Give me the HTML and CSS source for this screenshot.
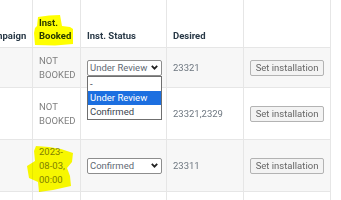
FILE: index.html
```html
<!DOCTYPE html>
<html lang="en">
<head>
    <meta charset="UTF-8">
    <meta name="viewport" content="width=device-width, initial-scale=1.0">
    <title>Installations</title>
    <link rel="stylesheet" href="styles.css">
</head>
<body>
    <div class="page">
        <table class="grid">
            <colgroup>
                <col class="c-campaign">
                <col class="c-booked">
                <col class="c-status">
                <col class="c-desired">
                <col class="c-action">
            </colgroup>
            <thead>
                <tr>
                    <th>Campaign</th>
                    <th class="marked">
                        <svg class="marker marker-head" width="48" height="47" viewBox="0 0 48 47">
                            <path d="M5,17 L16,15.5 L27,15 L29,26 L37,27 L40,29 L40,44 L22,45.5 L2,45 L1,33 L2,28 L4,26 Z"/>
                        </svg>
                        Inst.<br>Booked
                    </th>
                    <th>Inst. Status</th>
                    <th>Desired</th>
                    <th></th>
                </tr>
            </thead>
            <tbody>
                <tr class="row-a">
                    <td></td>
                    <td>NOT<br>BOOKED</td>
                    <td>
                        <div class="select open">
                            <span>Under Review</span>
                            <svg class="chev" width="7" height="5" viewBox="0 0 7 5"><path d="M0.8,0.8 L3.5,3.6 L6.2,0.8"/></svg>
                            <ul class="options">
                                <li>-</li>
                                <li class="active">Under Review</li>
                                <li>Confirmed</li>
                            </ul>
                        </div>
                    </td>
                    <td class="num">23321</td>
                    <td><button>Set installation</button></td>
                </tr>
                <tr class="row-b">
                    <td></td>
                    <td>NOT<br>BOOKED</td>
                    <td></td>
                    <td class="num">23321,2329</td>
                    <td><button>Set installation</button></td>
                </tr>
                <tr class="row-c">
                    <td></td>
                    <td class="marked">
                        <svg class="marker marker-date" width="56" height="54" viewBox="0 0 56 54">
                            <path d="M11,6 L24,7 L36,9 L48,13 L47,22 L42,28 L45,36 L46,46 L28,50 L14,52 L13,42 L4,38 L2,26 L10,21 L9,11 Z"/>
                        </svg>
                        2023-<br>08-03,<br>00:00
                    </td>
                    <td>
                        <div class="select">
                            <span>Confirmed</span>
                            <svg class="chev" width="7" height="5" viewBox="0 0 7 5"><path d="M0.8,0.8 L3.5,3.6 L6.2,0.8"/></svg>
                        </div>
                    </td>
                    <td class="num">23311</td>
                    <td><button>Set installation</button></td>
                </tr>
                <tr class="row-d">
                    <td></td>
                    <td></td>
                    <td></td>
                    <td></td>
                    <td></td>
                </tr>
            </tbody>
        </table>
    </div>
</body>
</html>
```

FILE: styles.css
```css
* {
    margin: 0;
    padding: 0;
    box-sizing: border-box;
}

body {
    background: #fff;
    font-family: Roboto, 'Liberation Sans', sans-serif;
    font-size: 9.5px;
    overflow: hidden;
}

.page {
    width: 341px;
    height: 200px;
    overflow: hidden;
}

.grid {
    table-layout: fixed;
    border-collapse: collapse;
    width: 355px;
    margin: -1px 0 0 -24px;
}

.c-campaign { width: 56px; }
.c-booked { width: 48px; }
.c-status { width: 86px; }
.c-desired { width: 77px; }
.c-action { width: 87px; }

th,
td {
    border: 1px solid #e6e6e6;
    text-align: left;
    padding: 0 6px;
}

th {
    height: 48px;
    vertical-align: bottom;
    padding-bottom: 5px;
    font-weight: bold;
    color: #283846;
    line-height: 13px;
}

td {
    vertical-align: middle;
    color: #808080;
    line-height: 14px;
}

.row-a td { height: 40px; background: #f7f7f7; }
.row-b td { height: 52px; background: #fff; }
.row-c td { height: 52px; background: #f7f7f7; }
.row-d td { height: 30px; background: #fff; }

td.num {
    color: #6e7780;
}

.marked {
    position: relative;
}

.marker {
    position: absolute;
    top: 0;
    left: 0;
    fill: #ffff00;
    mix-blend-mode: multiply;
    overflow: visible;
}

.marker-date {
    left: -8px;
}

.select {
    position: relative;
    display: flex;
    align-items: center;
    justify-content: space-between;
    width: 75px;
    height: 16px;
    padding: 0 3px 0 2px;
    background: #fff;
    border: 1px solid #8d8d8d;
    border-radius: 2px;
    color: #5f6a74;
    line-height: 14px;
}

.chev {
    fill: none;
    stroke: #222;
    stroke-width: 1.8;
}

.options {
    position: absolute;
    top: 15px;
    left: -1px;
    width: 75px;
    list-style: none;
    background: #fff;
    border: 1px solid #6f6f6f;
    z-index: 2;
}

.options li {
    height: 14px;
    line-height: 14px;
    padding-left: 2px;
    color: #3c4650;
}

.options li.active {
    background: #1c6fe0;
    color: #fff;
}

button {
    width: 74px;
    height: 16px;
    font-family: Roboto, 'Liberation Sans', sans-serif;
    font-size: 9.5px;
    color: #666;
    background: #f3f3f3;
    border: 1px solid #b3b3b3;
    border-radius: 2px;
    line-height: 14px;
}
```
